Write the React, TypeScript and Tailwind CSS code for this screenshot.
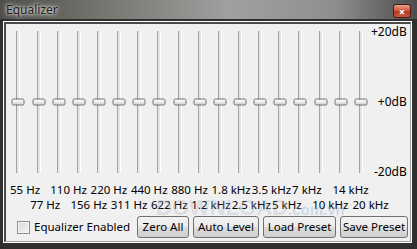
import React from "react";

const bands = ["55 Hz","77 Hz","110 Hz","156 Hz","220 Hz","311 Hz","440 Hz","622 Hz","880 Hz","1.2 kHz","1.8 kHz","2.5 kHz","3.5 kHz","5 kHz","7 kHz","10 kHz","14 kHz","20 kHz"];

function Slider() {
  return (
    <div className="relative w-[20.15px] h-[142px] flex justify-center shrink-0">
      <div className="w-[4px] h-full border-l border-[#a3a3a3] border-r border-r-white bg-[#e4e4e4]" />
      <div className="absolute left-1/2 top-1/2 -translate-x-1/2 -translate-y-1/2 w-[13px] h-[7px] rounded-[2px] border border-[#6f6f6f] bg-[linear-gradient(180deg,#ffffff_0%,#ececec_50%,#cfcfcf_100%)]" />
    </div>
  );
}

function Btn({ label, w }: { label: string; w: string }) {
  return (
    <div className={`${w} h-[22px] shrink-0 flex items-center justify-center rounded-[3px] border border-[#707070] bg-[linear-gradient(180deg,#f2f2f2_0%,#ebebeb_50%,#dddddd_51%,#cfcfcf_100%)] text-black whitespace-nowrap`}>
      {label}
    </div>
  );
}

export default function App() {
  const row1 = bands.filter((_, i) => i % 2 === 0);
  const row2 = bands.filter((_, i) => i % 2 === 1);
  return (
    <div className="w-[417px] h-[249px] flex flex-col overflow-hidden bg-[#2f2f2f] text-[11.5px] text-black" style={{ fontFamily: '"Noto Sans", "Open Sans", sans-serif' }}>
      <div className="h-[19px] shrink-0 flex items-center justify-between pl-[6px] pr-[6px] bg-[linear-gradient(90deg,#4f4d49_0%,#77756f_25%,#a0a0a0_55%,#8f8f8f_80%,#4d4d4d_100%)]">
        <span className="text-[12px] leading-none text-[#1b1b1b] [text-shadow:0_0_6px_#ffffff,0_0_3px_#ffffff]">Equalizer</span>
        <div className="w-[18px] h-[14px] mt-[3px] rounded-[3px] border border-[#4a1c14] bg-[linear-gradient(180deg,#e7a08f_0%,#d0583f_45%,#b43a22_55%,#c9553b_100%)] flex items-center justify-center text-white text-[11px] font-bold leading-none">
          ×
        </div>
      </div>
      <div className="flex-1 pt-[2px] pl-[3px] pr-[6px] pb-[6px] flex">
        <div className="flex-1 border border-white flex">
          <div className="flex-1 border-l-2 border-t-2 border-[#4a4a4a] border-r border-b border-r-[#a0a0a0] border-b-[#a0a0a0] bg-[#f0f0f0] flex flex-col relative">
            <div className="flex pt-[7px] pl-[2.4px]">
              <div className="flex">
                {bands.map((b) => (
                  <Slider key={b} />
                ))}
              </div>
              <div className="flex-1 flex flex-col justify-between items-end pr-[3px] -mt-[6px] -mb-[6px] leading-[14px] text-[12px]">
                <span>+20dB</span>
                <span>+0dB</span>
                <span>-20dB</span>
              </div>
            </div>
            <div className="flex pl-[4px] mt-[9px] leading-[15px] whitespace-nowrap">
              {row1.map((b) => (
                <div key={b} className="w-[40.3px] shrink-0">{b}</div>
              ))}
            </div>
            <div className="flex pl-[24.15px] leading-[15px] whitespace-nowrap">
              {row2.map((b) => (
                <div key={b} className="w-[40.3px] shrink-0">{b}</div>
              ))}
            </div>
            <div className="flex items-center mt-[4px] pl-[11px]">
              <div className="w-[13px] h-[13px] shrink-0 border border-[#8e8f8f] bg-[linear-gradient(135deg,#d9d9d9_0%,#f4f4f4_100%)] shadow-[inset_0_0_0_1px_#f4f4f4]" />
              <span className="ml-[4px] w-[103px] shrink-0 whitespace-nowrap">Equalizer Enabled</span>
              <div className="flex gap-[4px]">
                <Btn label="Zero All" w="w-[52px]" />
                <Btn label="Auto Level" w="w-[66px]" />
                <Btn label="Load Preset" w="w-[73px]" />
                <Btn label="Save Preset" w="w-[68px]" />
              </div>
            </div>
            <div className="absolute left-[150px] top-[173px] text-[22px] leading-none font-bold text-[rgba(170,178,196,0.3)] pointer-events-none whitespace-nowrap" style={{ fontFamily: '"Liberation Sans", sans-serif' }}>
              DOWNLOAD<span className="text-[15px] text-[rgba(120,160,210,0.3)]">.com.vn</span>
            </div>
          </div>
        </div>
      </div>
    </div>
  );
}
